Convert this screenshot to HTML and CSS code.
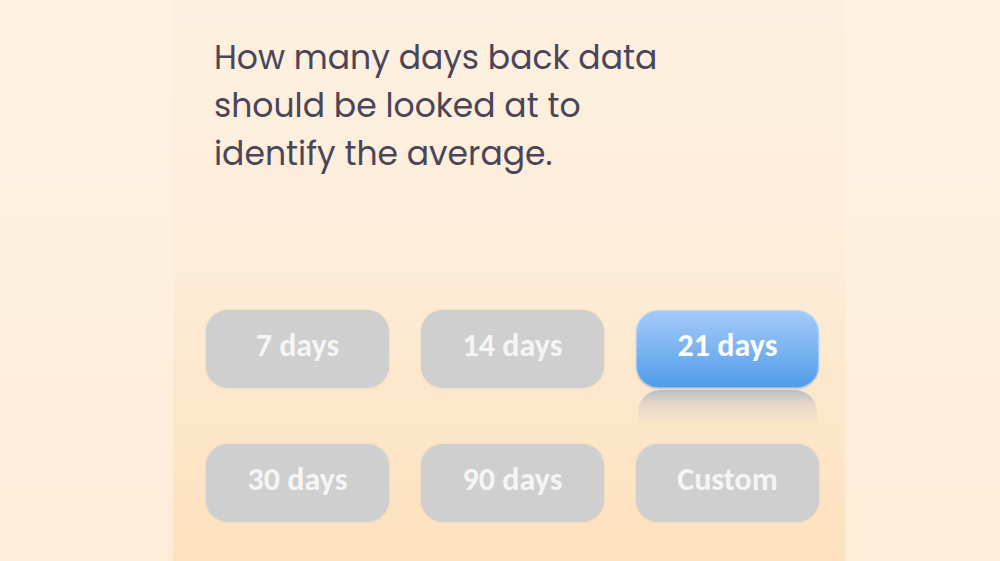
FILE: index.html
```html
<!DOCTYPE html>
<html>
<head>
<meta charset="utf-8">
<link rel="stylesheet" href="styles.css">
</head>
<body>
<div class="stage">
  <main class="panel">
    <p class="question">How many days back data<br>should be looked at to<br>identify the average.</p>
    <div class="options">
      <button class="opt">7 days</button>
      <button class="opt">14 days</button>
      <button class="opt selected">21 days</button>
      <button class="opt">30 days</button>
      <button class="opt">90 days</button>
      <button class="opt">Custom</button>
    </div>
  </main>
</div>
</body>
</html>
```
FILE: styles.css
```css
html, body {
  margin: 0;
  padding: 0;
  height: 100%;
}
body {
  background: linear-gradient(180deg, #fef2e3 0%, #fef0df 50%, #fdecd8 100%);
  overflow: hidden;
}
.stage {
  display: flex;
  justify-content: center;
  height: 561px;
  padding-left: 18px;
  box-sizing: border-box;
}
.panel {
  width: 672px;
  height: 561px;
  box-sizing: border-box;
  background: linear-gradient(180deg, #fdf0e0 0%, #fdeedb 40%, #fde6c9 75%, #fde1be 100%);
  padding: 34px 0 0 33px;
}
.question {
  margin: 0 0 0 8px;
  font-family: "Poppins", "Lato", "Noto Sans", sans-serif;
  font-size: 33px;
  line-height: 48px;
  color: #4a4558;
}
.options {
  margin-top: 132px;
  display: grid;
  grid-template-columns: repeat(3, 183px);
  grid-auto-rows: 78px;
  column-gap: 32px;
  row-gap: 56px;
}
.opt {
  position: relative;
  border: none;
  border-radius: 22px;
  background: #cfcfcf;
  color: #f5f5f5;
  font-family: "Carlito", "Lato", "Open Sans", sans-serif;
  font-weight: 700;
  font-size: 32px;
  padding: 0 0 8px 0;
  box-shadow: 0 0 2px rgba(200, 190, 180, 0.6);
}
.opt.selected {
  background: linear-gradient(180deg, #a3cbf9 0%, #80b6f2 45%, #4e9ce8 100%);
  color: #ffffff;
  box-shadow: inset 0 0 0 1px rgba(255,255,255,0.35), 0 1px 2px rgba(120,140,170,0.4);
}
.opt.selected::after {
  content: "";
  position: absolute;
  left: 2px;
  right: 2px;
  top: 80px;
  height: 34px;
  border-radius: 22px 22px 0 0;
  background: linear-gradient(180deg, rgba(130,155,190,0.55) 0%, rgba(170,180,195,0.3) 40%, rgba(253,230,200,0) 100%);
}
```
